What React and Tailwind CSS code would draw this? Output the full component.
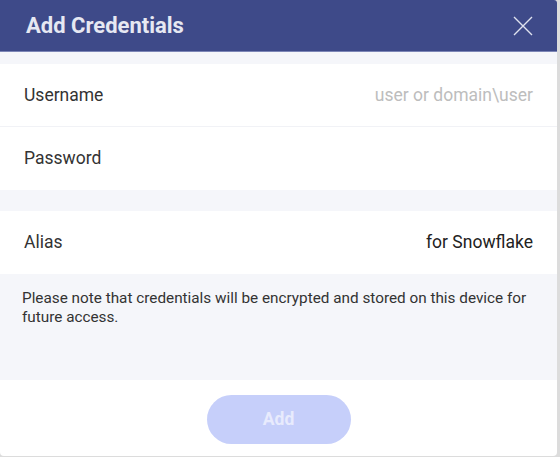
import React from 'react'

const Row = ({ label, children, border }) => (
  <div className={`flex h-[63px] items-center justify-between bg-white px-6 ${border ? 'border-b border-[#f1f2f6]' : ''}`}>
    <span className="text-[17.5px] text-[#333]">{label}</span>
    {children}
  </div>
)

export default function App() {
  return (
    <div className="h-[457px] w-[560px] bg-[#dcdcdc]" style={{ fontFamily: 'Roboto, "Liberation Sans", sans-serif' }}>
      <div className="flex h-[456px] w-[557px] flex-col overflow-hidden rounded-b-[4px] rounded-tr-[3px] bg-white">
        <div className="flex h-[52px] items-center justify-between border-b border-[#7d86b6] bg-[#3e4a89] pl-[26px] pr-[24px]">
          <h1 className="text-[22px] font-bold text-[#e6e8f2]">Add Credentials</h1>
          <svg width="20" height="20" viewBox="0 0 20 20" fill="none" stroke="#dfe2ef" strokeWidth="1.4">
            <path d="M1 1L19 19M19 1L1 19" />
          </svg>
        </div>
        <div className="h-[12px] bg-[#f5f6fa]" />
        <Row label="Username" border>
          <span className="text-[17.5px] text-[#bdbdbd]">user or domain\user</span>
        </Row>
        <Row label="Password" />
        <div className="h-[21px] bg-[#f5f6fa]" />
        <Row label="Alias">
          <span className="text-[17.5px] text-[#222]">for Snowflake</span>
        </Row>
        <div className="h-[106px] bg-[#f5f6fa] px-[22px] pt-[15px] text-[15.3px] leading-[19px] text-[#333]">
          Please note that credentials will be encrypted and stored on this device for future access.
        </div>
        <div className="flex flex-1 items-start justify-center pt-[15px]">
          <button className="h-[49px] w-[144px] rounded-full bg-[#c6cffa] text-[17.5px] font-bold text-[#e8ebfd]">Add</button>
        </div>
      </div>
    </div>
  )
}
